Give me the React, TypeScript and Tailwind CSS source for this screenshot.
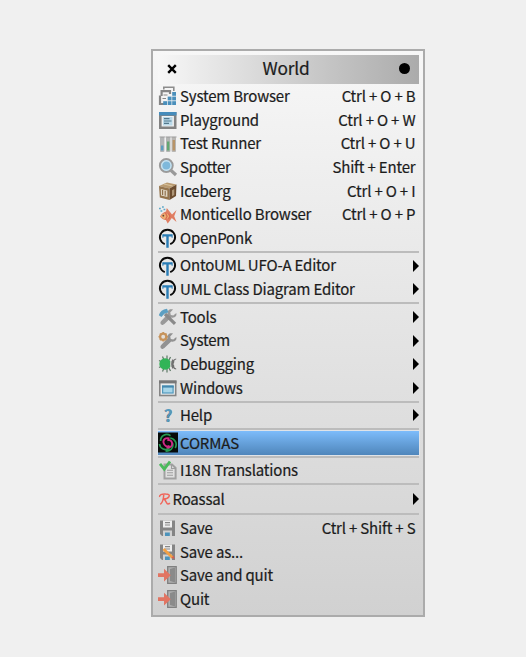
import type { ReactNode } from "react";

function Svg({ children, className = "" }: { children: ReactNode; className?: string }) {
  return (
    <svg viewBox="0 0 20 20" className={"h-5 w-5 shrink-0 " + className} fill="none">
      {children}
    </svg>
  );
}

const BrowserIcon = () => (
  <Svg>
    <path d="M5.8 3.5V1.3H15.8V5" stroke="#8c8c8c" strokeWidth="1.6" />
    <path d="M3.6 10V5.2H12V8" stroke="#858585" strokeWidth="2.2" />
    <path d="M8 18H2V9.5" stroke="#858585" strokeWidth="2.2" />
    <path d="M5.5 9H9.5M4.5 12.5H8" stroke="#888" strokeWidth="1.1" />
    {[[14.2, 6], [9.7, 10.6], [14.2, 10.6], [5.2, 15.2], [9.7, 15.2], [14.2, 15.2]].map(([x, y]) => (
      <rect key={x + "-" + y} x={x} y={y} width="3.8" height="3.8" fill="#4a8fbb" />
    ))}
  </Svg>
);
const PlaygroundIcon = () => (
  <Svg>
    <rect x="1" y="2" width="17.5" height="17" fill="#828282" />
    <rect x="1" y="2" width="17.5" height="3.4" fill="#468cbb" />
    <rect x="3.6" y="6" width="12.3" height="10.5" fill="#f2f2f2" />
    <path d="M5 7h9.5v8.5H5z" fill="#b9d9e9" />
    <path d="M6 8.7h5.5M6 11h7.5M6 13.4h5" stroke="#53788c" strokeWidth="1.2" />
  </Svg>
);
const TestIcon = () => (
  <Svg>
    <rect x="2" y="3" width="4.4" height="15" rx="1" fill="#b3b5b6" />
    <rect x="8" y="3" width="4.4" height="15" rx="1" fill="#b3b5b4" />
    <rect x="13.6" y="3" width="4.4" height="15" rx="1" fill="#b8b6b3" />
    <path d="M1.5 3h5.4M7.5 3h5.4M13.1 3h5.4" stroke="#999" strokeWidth="1.2" />
    <path d="M3 11.5h2.4v5H3z" fill="#5c9dc0" />
    <path d="M9 7.5h2.4v9H9z" fill="#62a771" />
    <path d="M14.6 6h2.4v10.5h-2.4z" fill="#b99467" />
  </Svg>
);
const SpotterIcon = () => (
  <Svg>
    <path d="m12 12.5 6 5.5" stroke="#999" strokeWidth="3.2" />
    <circle cx="8.3" cy="8.5" r="6.4" fill="#7fb9db" stroke="#9b9b9b" strokeWidth="2" />
    <circle cx="8.3" cy="8.5" r="4.7" stroke="#cce3ee" strokeWidth="1.4" />
  </Svg>
);
const CrateIcon = () => (
  <Svg>
    <path d="m1 5 8-3.5 9.5 2-7 4z" fill="#b99a70" />
    <path d="m1 5 10.5 2.5V19L1.8 16.5z" fill="#94744d" />
    <path d="m11.5 7.5 7-4-.5 11.5-6.5 4z" fill="#6b4c2f" />
    <path d="m2.8 8 6.6 1.5v6.5L3 14.5z" fill="#e0d6c3" />
    <path d="M4.6 9v5M7.2 9.7v5" stroke="#8c6c48" strokeWidth="1.1" />
    <path d="m14 9.3 2.3-1.3v6L14 15.3z" fill="#ad9576" />
    <path d="m6 3 8.5 2" stroke="#d8c29b" strokeWidth="1.2" />
  </Svg>
);
const FishIcon = () => (
  <Svg>
    <path d="M2 11.5C4 8 6 7 8 6.5L8.8 3l3.2 4 2 2.6L18.5 5l-2.3 6.2 2.3 5.8-4.7-4-1.8 2.5-2.3 3-1.8-3.5C5.5 14.8 3.3 13.5 2 11.5z" fill="#e07d61" />
    <path d="M2.8 11.3c2.2-4 6.5-4.4 8.8 0-2.3 4-6.6 3.8-8.8 0z" fill="#edae70" />
    <path d="m7.5 8 1.6 3.2-1.6 3.2M10.6 8.5l1.2 2.7-1.2 2.8" stroke="#d96850" strokeWidth="1.2" />
    <circle cx="5.3" cy="10.7" r=".9" fill="#61443a" />
    <path d="M1 3.5h1.8M4 2h1.8M2.5 6h1.8M5.5 4.5h1.8" stroke="#5ca6c7" strokeWidth="1.5" />
  </Svg>
);
const PonkIcon = () => (
  <Svg>
    <path d="M6.8 16.1A7.6 7.4 0 1 1 12.2 16.1" stroke="#0a0a0a" strokeWidth="1.9" />
    <path d="M4.8 7.4h9.4M9.5 7.4v12.3" stroke="#2a7db6" strokeWidth="2.4" />
    <path d="M4.9 6.4v3.4M14.1 6.4v3.4" stroke="#2a7db6" strokeWidth="1" />
  </Svg>
);
const Wrench = ({ color }: { color: string }) => (
  <path d="M18.3 6 15.3 8.6l-2.5-.7-.6-2.4L15 2.6c-3.5-1-6.2 1.3-5.4 4.6l-6.4 6.7c-2.2 2.3.9 5.5 3.2 3.2l6.8-6.6c3.2.8 6-1.3 5.1-4.5z" fill={color} />
);
const ToolsIcon = () => (
  <Svg>
    <Wrench color="#999" />
    <path d="m7 7 10 9.8" stroke="#8a8a8a" strokeWidth="3.2" />
    <path d="M.8 8.2C2 4.5 4.5 2.3 9 1.8l1.4 3.4-4 1.5-3 3.3z" fill="#5c9fc2" />
  </Svg>
);
const SystemIcon = () => (
  <Svg>
    <Wrench color="#929292" />
    <circle cx="5.2" cy="5.8" r="3.1" fill="#e3dfd9" stroke="#c6935c" strokeWidth="2.3" />
    <path d="M5.2 1v1.5m0 6.5v1.5M.5 5.8H2m6.4 0h1.5M1.9 2.5l1 1m4.6 4.6 1 1m0-6.6-1 1M2.9 8.1l-1 1" stroke="#c6935c" strokeWidth="1.6" />
  </Svg>
);
const BugIcon = () => (
  <Svg>
    <path d="M4.5 2.5 6 6M9 1.5v5M12.5 3 11 6M1 6.5l4 2M1 13.5l4-2M4.5 17.5 6 14M9 18.5v-4.5M12.5 17 11 14" stroke="#5b7864" strokeWidth="1.2" />
    <ellipse cx="7.2" cy="10" rx="5.9" ry="5.7" fill="#31b457" />
    <path d="M14.6 5.2c-3 2.5-3 7 0 9.6 1.5-1 2.1-2.2 1.5-3.5-.7-.8-.7-1.8 0-2.6.6-1.3 0-2.5-1.5-3.5z" fill="#707070" />
    <path d="M13.7 5.4c-1.4 2.7-1.4 6.5 0 9.2" stroke="#dedede" strokeWidth="1" />
    <path d="M15.4 7.2c.5-1.5 1.3-2.2 2.8-2.2M15.4 12.8c.5 1.5 1.3 2.2 2.8 2.2" stroke="#707070" strokeWidth="1.2" />
  </Svg>
);
const WindowsIcon = () => (
  <Svg>
    <rect x="1.8" y="3.2" width="15.9" height="14.3" fill="#e8eced" stroke="#858585" strokeWidth="1.6" />
    <path d="M1 4h17.5" stroke="#777" strokeWidth="2.8" />
    <rect x="4.6" y="8" width="10.5" height="7" fill="#a7d5e8" stroke="#5198bc" strokeWidth="1.2" />
    <path d="M4 8.6h11.7" stroke="#4488ae" strokeWidth="2" />
  </Svg>
);
const HelpIcon = () => (
  <span className="w-5 shrink-0 text-center text-[17px] leading-5 font-bold text-[#559bbf]">?</span>
);
const CormasIcon = () => (
  <Svg className="!h-[21px]">
    <rect width="20" height="20" fill="#070b09" />
    <path d="M12.5 3.2C8 .3 2.5 3 2.6 8.5M1.5 11.5c.5 5 6 7 10 4.2M7.5 18.5c5 .8 8.5-3.5 7-8M17.2 15.5c2.5-4.5-.3-9.5-5-10" stroke="#259a50" strokeWidth="1.7" />
    <path d="M11.5 6C7.5 4.6 4.7 7.2 5.6 10.4c.7 3.2 3.7 4.2 6 3M8.5 14.8c3.8 1 6.2-1.4 5.6-4.3-.5-2.7-3-3.6-4.8-2.5" stroke="#cf2a86" strokeWidth="1.9" />
    <circle cx="10" cy="10.5" r="1.3" fill="#160812" />
  </Svg>
);
const TranslateIcon = () => (
  <Svg>
    <path d="M6.5 4.5h7.5l3.6 3.5v10.5H6.5z" fill="#e0e0e0" stroke="#a1a1a1" strokeWidth="2" />
    <path d="M13.5 4v4.5H18M9 10.3h6M9 12.8h6M9 15.3h6" stroke="#9d9d9d" strokeWidth="1.1" />
    <path d="m2 3.8 4.3 5.4L12 1.5" stroke="#4aba5b" strokeWidth="2.8" />
  </Svg>
);
const RoassalIcon = () => (
  <svg viewBox="0 0 13 20" className="h-5 w-[13px] shrink-0" fill="none">
    <path d="M1.6 8c-.5-2 2-3.3 6-3.1 3.4 0 4.2 1.3 3.4 2.7-.9 1.6-3 2.4-5.4 2.5 2.3.5 2.8 4.8 4.3 5 .9 0 1.5-.4 2-1.1M5.8 5.5c-.3 4.5-1.4 8.5-3.5 9.8" stroke="#f0665b" strokeWidth="1.5" />
  </svg>
);
const Floppy = () => (
  <>
    <path d="M2 2.5h15v15.5H4L2 16z" fill="#858585" />
    <path d="M5 2.5h9v7H5z" fill="#eee" />
    <path d="M7 4.7h5M7 7h5" stroke="#888" strokeWidth="1.2" />
    <path d="M5 12.5h9V18H5z" fill="#d1d1d1" />
    <path d="M7 14.5h4.8V18H7z" fill="#4c93bb" />
  </>
);
const SaveIcon = () => <Svg><Floppy /></Svg>;
const SaveAsIcon = () => (
  <Svg>
    <Floppy />
    <path d="m5.5 7 9.2 8.7" stroke="#f2a044" strokeWidth="2.8" />
    <path d="m13.4 15.8 2.3-2.3 1 3.6z" fill="#d45f55" />
  </Svg>
);
const ExitIcon = () => (
  <Svg>
    <path d="M9.7 1.7h8.5v16.6H9.7z" fill="#b0b0b0" stroke="#808080" strokeWidth="1.3" />
    <path d="m12 4 5-1.6v15.2L12 16z" fill="#8a8a8a" />
    <path d="M0 8.2h6V3.8l6.8 6.4L6 16.5V12H0z" fill="#e17462" />
  </Svg>
);

type Item = { label: string; icon: () => ReactNode; keys?: string; sub?: boolean };

const groups: Item[][] = [
  [
    { label: "System Browser", icon: BrowserIcon, keys: "Ctrl + O + B" },
    { label: "Playground", icon: PlaygroundIcon, keys: "Ctrl + O + W" },
    { label: "Test Runner", icon: TestIcon, keys: "Ctrl + O + U" },
    { label: "Spotter", icon: SpotterIcon, keys: "Shift + Enter" },
    { label: "Iceberg", icon: CrateIcon, keys: "Ctrl + O + I" },
    { label: "Monticello Browser", icon: FishIcon, keys: "Ctrl + O + P" },
    { label: "OpenPonk", icon: PonkIcon },
  ],
  [
    { label: "OntoUML UFO-A Editor", icon: PonkIcon, sub: true },
    { label: "UML Class Diagram Editor", icon: PonkIcon, sub: true },
  ],
  [
    { label: "Tools", icon: ToolsIcon, sub: true },
    { label: "System", icon: SystemIcon, sub: true },
    { label: "Debugging", icon: BugIcon, sub: true },
    { label: "Windows", icon: WindowsIcon, sub: true },
  ],
  [{ label: "Help", icon: HelpIcon, sub: true }],
  [{ label: "CORMAS", icon: CormasIcon }],
  [{ label: "I18N Translations", icon: TranslateIcon }],
  [{ label: "Roassal", icon: RoassalIcon, sub: true }],
  [
    { label: "Save", icon: SaveIcon, keys: "Ctrl + Shift + S" },
    { label: "Save as...", icon: SaveAsIcon },
    { label: "Save and quit", icon: ExitIcon },
    { label: "Quit", icon: ExitIcon },
  ],
];

function Row({ item }: { item: Item }) {
  const Icon = item.icon;
  const active = item.label === "CORMAS";
  const tall = item.label === "Roassal";
  return (
    <div
      className={
        "flex items-center " +
        (tall ? "h-[26.4px] " : "h-[23.7px] ") +
        (active ? "bg-linear-to-b from-[#7dbcfb] to-[#4f86bb] shadow-[0_0_0_1px_#dfe3e8]" : "")
      }
    >
      <Icon />
      <span className={"pb-[0.6px] whitespace-nowrap " + (tall ? "ml-[1.5px]" : "ml-[2px]")}>{item.label}</span>
      {item.keys && <span className="mr-[3.6px] ml-auto pb-[0.6px] whitespace-nowrap">{item.keys}</span>}
      {item.sub && (
        <svg viewBox="0 0 6 12" className="ml-auto h-3 w-1.5">
          <path d="M0 0 6 6 0 12z" fill="#000" />
        </svg>
      )}
    </div>
  );
}

export default function App() {
  return (
    <div className="h-[657px] w-[526px] bg-[#f0f0f0] pt-[49px] pl-[151px] font-['Noto_Sans_CJK_SC',sans-serif] text-[15px] leading-5 tracking-[-0.18px] text-[#1c1c1c] [-webkit-text-stroke:0.2px_#1c1c1c]">
      <div className="h-[568px] w-[274px] border-2 border-[#ababab] bg-linear-to-b from-[#f7f7f7] to-[#d1d1d1] pt-1 pr-[4px] pl-[5px]">
        <div className="mb-[0.3px] flex h-[29px] items-center bg-linear-to-r from-[#f7f7f7] to-[#ababab] pr-[9px] pl-[9px]">
          <svg viewBox="0 0 10 10" className="mb-px h-2.5 w-2.5">
            <path d="m1.2 1.2 7.6 7.6m0-7.6L1.2 8.8" stroke="#000" strokeWidth="2.4" />
          </svg>
          <span className="flex-1 pr-1 pb-1 text-center text-[17.3px]">World</span>
          <span className="mb-[2px] h-[11px] w-[11px] rounded-full bg-black" />
        </div>
        {groups.map((group, i) => (
          <div key={i}>
            {i > 0 && (
              <div className="flex h-[3.8px] items-center">
                <div className="h-[2px] w-full bg-[#bcbcbc]" />
              </div>
            )}
            {group.map((item) => (
              <Row key={item.label} item={item} />
            ))}
          </div>
        ))}
      </div>
    </div>
  );
}
